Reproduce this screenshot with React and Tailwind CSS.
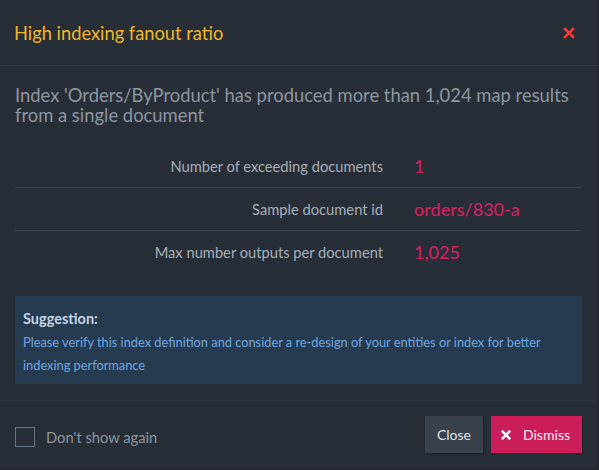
import React, { useState } from 'react';

const rows = [
  { label: 'Number of exceeding documents', value: '1' },
  { label: 'Sample document id', value: 'orders/830-a' },
  { label: 'Max number outputs per document', value: '1,025' },
];

const CrossIcon = ({ className, width = 2.6 }) => (
  <svg viewBox="0 0 12 12" className={className} fill="none" stroke="currentColor" strokeWidth={width} strokeLinecap="square">
    <path d="M2 2 L10 10 M10 2 L2 10" />
  </svg>
);

const App = () => {
  const [dontShow, setDontShow] = useState(false);

  return (
    <div className="w-[599px] h-[470px] bg-[#282e37] flex flex-col font-['Lato',sans-serif] border-r-2 border-b-2 border-[#22272e]">
      {/* header */}
      <div className="h-[66px] flex items-center justify-between pl-[14px] pr-[22px] border-b border-[#313842]">
        <h2 className="text-[18.3px] text-[#f0b62b] pt-[3px]">High indexing fanout ratio</h2>
        <button className="text-[#f23c32]">
          <CrossIcon className="w-[12px] h-[12px]" />
        </button>
      </div>

      {/* body */}
      <div className="px-[15px] pt-[19px]">
        <p className="text-[18.4px] leading-[20px] text-[#8d96a1]">
          Index 'Orders/ByProduct' has produced more than 1,024 map results from a single document
        </p>

        <div className="mt-[20px]">
          {rows.map((row, i) => (
            <div
              key={row.label}
              className={`flex items-center h-[43px] ${i < rows.length - 1 ? 'border-b border-[#3a414c]' : ''}`}
            >
              <div className="w-[368px] text-right text-[14.7px] text-[#a6aeb9]">{row.label}</div>
              <div className="pl-[31px] text-[18px] text-[#d1205f] font-medium">{row.value}</div>
            </div>
          ))}
        </div>

        <div className="mt-[22px] bg-[#263a50] px-[8px] pt-[13px] h-[88px]">
          <div className="text-[14.5px] font-bold text-[#c3d5e8] leading-[20px]">Suggestion:</div>
          <p className="text-[12.8px] text-[#6ea8e2] leading-[23px] mt-[2px]">
            Please verify this index definition and consider a re-design of your entities or index for better indexing performance
          </p>
        </div>
      </div>

      {/* footer */}
      <div className="mt-auto h-[68px] border-t border-[#2d333c] flex items-center justify-between px-[15px]">
        <label className="flex items-center gap-[11px] cursor-pointer mt-[6px]">
          <input
            type="checkbox"
            checked={dontShow}
            onChange={() => setDontShow(!dontShow)}
            className="appearance-none w-[20px] h-[20px] border border-[#66728a] bg-transparent"
          />
          <span className="text-[14.7px] text-[#8d96a1]">Don't show again</span>
        </label>
        <div className="flex gap-[8px]">
          <button className="h-[37px] w-[58px] bg-[#38414c] text-[#dfe3e8] text-[14px] shadow-[1px_1px_2px_rgba(0,0,0,0.3)]">
            Close
          </button>
          <button className="h-[37px] w-[91px] bg-[#cc1d5b] text-[#f4dce5] text-[14px] font-medium flex items-center justify-center gap-[12px] pr-[2px] shadow-[1px_1px_2px_rgba(0,0,0,0.3)]">
            <CrossIcon className="w-[10px] h-[10px] text-white" width={3} />
            Dismiss
          </button>
        </div>
      </div>
    </div>
  );
};

export default App;
